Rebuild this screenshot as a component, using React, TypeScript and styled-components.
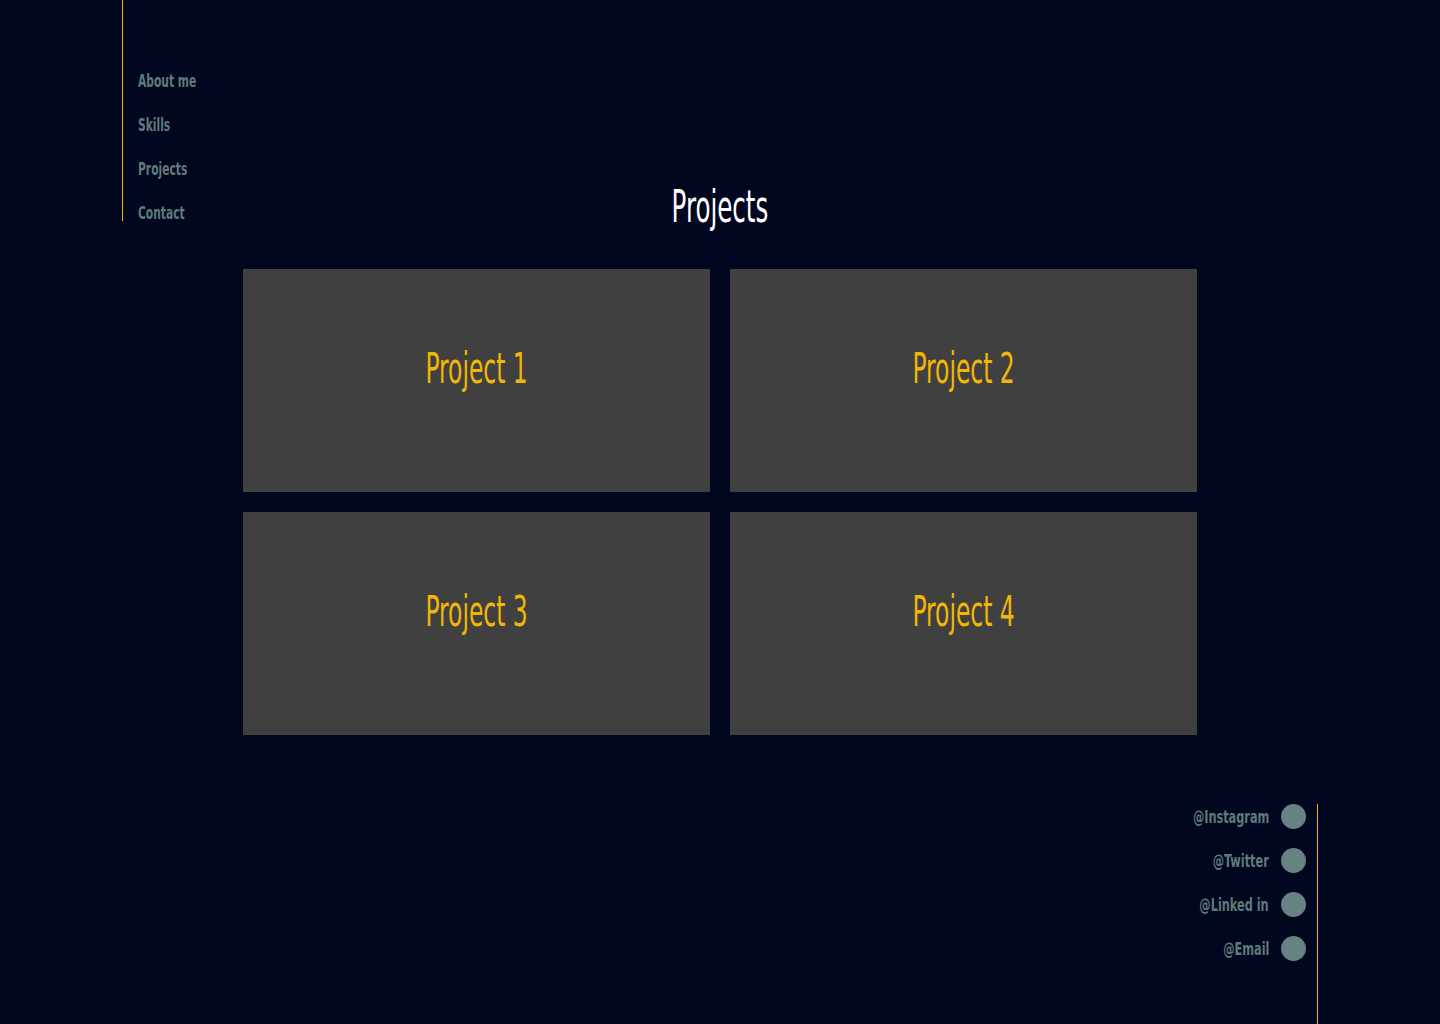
import React from "react";
import styled, { createGlobalStyle } from "styled-components";

const Global = createGlobalStyle`
  html, body { margin: 0; padding: 0; background: #01071e; }
  body { font-family: "DejaVu Sans Condensed", "Liberation Sans", sans-serif; }
  * { box-sizing: border-box; }
`;

const Page = styled.div`
  min-height: 1024px;
  background: #01071e;
  display: flex;
  flex-direction: column;
  font-family: "DejaVu Sans Condensed", "Liberation Sans", sans-serif;
`;

const Header = styled.header`
  display: grid;
  grid-template-columns: 1fr auto 1fr;
  align-items: start;
`;

const Nav = styled.nav`
  margin-left: 122px;
  height: 221px;
  border-left: 1px solid #f2b705;
  padding: 72px 0 0 15px;
  display: flex;
  flex-direction: column;
  align-items: flex-start;
  gap: 26px;
`;

const NavLink = styled.a`
  display: inline-block;
  color: #5f7a7b;
  font-weight: 700;
  font-size: 17px;
  line-height: 18px;
  text-decoration: none;
  transform: scaleX(0.7);
  transform-origin: left center;
`;

const Title = styled.h1`
  margin: 183px 0 0;
  color: #ffffff;
  font-weight: 400;
  font-size: 44px;
  line-height: 48px;
  text-align: center;
  transform: scaleX(0.62);
  transform-origin: center;
`;

const Grid = styled.section`
  margin: 38px auto 0;
  display: grid;
  grid-template-columns: repeat(2, 467px);
  grid-auto-rows: 223px;
  gap: 20px;
`;

const Card = styled.div`
  background: #404040;
  display: flex;
  justify-content: center;
  align-items: flex-start;
  padding-top: 76px;
`;

const CardTitle = styled.h2`
  margin: 0;
  color: #f2b705;
  font-weight: 400;
  font-size: 42px;
  line-height: 48px;
  transform: scaleX(0.62);
  transform-origin: center;
`;

const Footer = styled.footer`
  margin-top: 69px;
  display: flex;
  justify-content: flex-end;
  padding-right: 122px;
`;

const Social = styled.ul`
  list-style: none;
  margin: 0;
  height: 220px;
  padding: 0 11px 0 0;
  border-right: 1px solid #f2b705;
  display: flex;
  flex-direction: column;
  gap: 19px;
`;

const SocialItem = styled.li`
  display: flex;
  align-items: center;
  justify-content: flex-end;
  gap: 12px;
  height: 25px;
`;

const SocialLabel = styled.span`
  display: inline-block;
  color: #5f7a7b;
  font-weight: 700;
  font-size: 17px;
  transform: scaleX(0.74);
  transform-origin: right center;
`;

const Dot = styled.span`
  width: 25px;
  height: 25px;
  border-radius: 50%;
  background: #668282;
`;

const navItems = ["About me", "Skills", "Projects", "Contact"];
const projects = ["Project 1", "Project 2", "Project 3", "Project 4"];
const socials = ["@Instagram", "@Twitter", "@Linked in", "@Email"];

export default function App() {
  return (
    <Page>
      <Global />
      <Header>
        <Nav>
          {navItems.map((n) => (
            <NavLink key={n} href="#">{n}</NavLink>
          ))}
        </Nav>
        <Title>Projects</Title>
        <div />
      </Header>
      <Grid>
        {projects.map((p) => (
          <Card key={p}>
            <CardTitle>{p}</CardTitle>
          </Card>
        ))}
      </Grid>
      <Footer>
        <Social>
          {socials.map((s) => (
            <SocialItem key={s}>
              <SocialLabel>{s}</SocialLabel>
              <Dot />
            </SocialItem>
          ))}
        </Social>
      </Footer>
    </Page>
  );
}
